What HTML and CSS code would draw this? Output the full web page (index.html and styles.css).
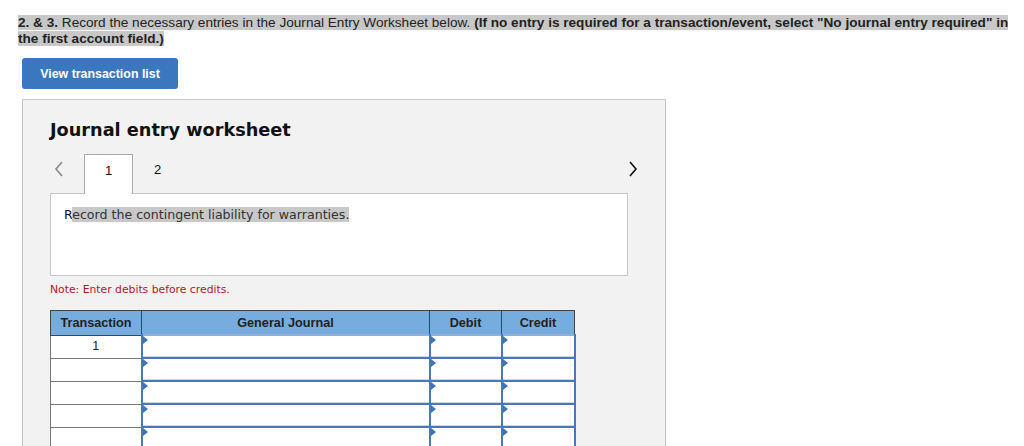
FILE: index.html
```html
<!DOCTYPE html>
<html>
<head>
<meta charset="utf-8">
<link rel="stylesheet" href="styles.css">
</head>
<body>
<div class="page">
  <p class="intro"><span class="hl"><b>2. &amp; 3.</b> Record the necessary entries in the Journal Entry Worksheet below. <b>(If no entry is required for a transaction/event, select "No journal entry required" in the first account field.)</b></span></p>
  <button class="btn">View transaction list</button>
  <div class="panel">
    <h2 class="title">Journal entry worksheet</h2>
    <div class="tabs">
      <span class="chev prev">
        <svg width="10" height="16" viewBox="0 0 10 16"><path d="M8 1 L2 8 L8 15" fill="none" stroke="#888" stroke-width="1.6"/></svg>
      </span>
      <span class="tab active">1</span>
      <span class="tab">2</span>
      <span class="spacer"></span>
      <span class="chev next">
        <svg width="10" height="16" viewBox="0 0 10 16"><path d="M2 1 L8 8 L2 15" fill="none" stroke="#111" stroke-width="1.6"/></svg>
      </span>
    </div>
    <div class="desc"><span class="first">R</span><span class="hl2">ecord the contingent liability for warranties.</span></div>
    <p class="note">Note: Enter debits before credits.</p>
    <table class="jt">
      <thead>
        <tr><th class="c1">Transaction</th><th class="c2">General Journal</th><th class="c3">Debit</th><th class="c4">Credit</th></tr>
      </thead>
      <tbody>
        <tr><td class="num">1</td><td class="in"><i></i></td><td class="in"><i></i></td><td class="in"><i></i></td></tr>
        <tr><td class="num"></td><td class="in"><i></i></td><td class="in"><i></i></td><td class="in"><i></i></td></tr>
        <tr><td class="num"></td><td class="in"><i></i></td><td class="in"><i></i></td><td class="in"><i></i></td></tr>
        <tr><td class="num"></td><td class="in"><i></i></td><td class="in"><i></i></td><td class="in"><i></i></td></tr>
        <tr><td class="num"></td><td class="in"><i></i></td><td class="in"><i></i></td><td class="in"><i></i></td></tr>
      </tbody>
    </table>
  </div>
</div>
</body>
</html>
```

FILE: styles.css
```css
html, body {
  margin: 0;
  padding: 0;
  background: #fff;
  overflow: hidden;
}
.page {
  width: 1024px;
  height: 446px;
  overflow: hidden;
  font-family: "Liberation Sans", Arial, sans-serif;
  color: #222;
}
.intro {
  margin: 0;
  padding: 15px 8px 0 18px;
  font-size: 13.6px;
  line-height: 16px;
}
.hl {
  background: #c8c8c8;
}
.btn {
  display: block;
  margin: 11px 0 0 22px;
  width: 156px;
  height: 31px;
  border: none;
  border-radius: 3px;
  background: #3b77bf;
  color: #fff;
  font-family: "Liberation Sans", Arial, sans-serif;
  font-weight: bold;
  font-size: 12.4px;
  padding: 0;
}
.panel {
  margin: 10px 0 0 22px;
  width: 615px;
  height: 400px;
  background: #f2f2f2;
  border: 1px solid #c8c8c8;
  padding: 0 0 0 27px;
  font-family: "DejaVu Sans", Verdana, sans-serif;
}
.title {
  margin: 0;
  padding-top: 19px;
  font-size: 17.7px;
  line-height: 22px;
  font-weight: bold;
  color: #111;
}
.tabs {
  display: flex;
  align-items: stretch;
  height: 39px;
  margin-top: 13px;
  width: 588px;
}
.chev {
  display: flex;
  align-items: center;
  padding-bottom: 10px;
}
.prev {
  width: 34px;
  padding-left: 4px;
  box-sizing: border-box;
}
.tab {
  width: 49px;
  box-sizing: border-box;
  display: flex;
  align-items: center;
  justify-content: center;
  padding-bottom: 9px;
  font-family: "Liberation Sans", Arial, sans-serif;
  font-size: 13px;
  color: #111;
}
.tab.active {
  background: #fff;
  border: 1px solid #aaa;
  border-bottom: none;
  margin-bottom: -1px;
  position: relative;
  z-index: 1;
}
.spacer { flex: 1; }
.next {
  width: 10px;
}
.desc {
  width: 578px;
  height: 83px;
  box-sizing: border-box;
  background: #fff;
  border: 1px solid #c8c8c8;
  padding: 13px 0 0 13px;
  font-size: 12.6px;
  line-height: 16px;
  color: #333;
}
.desc .first { color: #111; }
.hl2 { background: #c8c8c8; }
.note {
  margin: 7px 0 0 0;
  font-size: 10.8px;
  line-height: 14px;
  color: #b3191c;
}
.jt {
  margin-top: 13px;
  border-collapse: collapse;
  font-family: "Liberation Sans", Arial, sans-serif;
  table-layout: fixed;
  width: 524px;
}
.jt th {
  height: 23px;
  background: #77acdf;
  border: 1px solid #444;
  font-size: 12.7px;
  font-weight: bold;
  color: #222;
  padding: 0;
}
.jt .c1 { width: 90px; }
.jt .c2 { width: 287px; }
.jt .c3 { width: 71px; }
.jt .c4 { width: 72px; }
.jt td {
  height: 21px;
  padding: 0;
  background: #fff;
}
.jt td.num {
  border: 1px solid #777;
  text-align: center;
  font-size: 12.5px;
  color: #222;
  vertical-align: top;
  padding-top: 3px;
  height: 18px;
}
.jt td.in {
  position: relative;
  border-left: 2px solid #4a78b6;
  border-right: 2px solid #4a78b6;
  border-top: 2px solid #8fb0d8;
  border-bottom: 2px solid #4a78b6;
  box-shadow: inset 0 -1px 0 #c9d8ec;
}
.jt td.in i {
  position: absolute;
  left: 0;
  top: 0;
  width: 0;
  height: 0;
  border-top: 4px solid transparent;
  border-bottom: 4px solid transparent;
  border-left: 5px solid #3d72c0;
}
```
